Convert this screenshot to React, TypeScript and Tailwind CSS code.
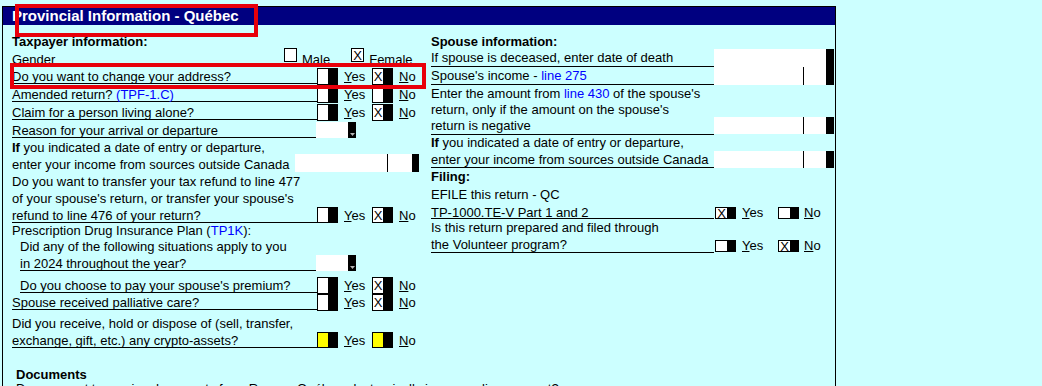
import React from "react";

function CheckBox({ checked, yellow, className = "" }: { checked?: boolean; yellow?: boolean; className?: string }) {
  return (
    <div className={`flex shrink-0 ${className}`}>
      <div
        className={`w-[12px] h-full border border-black ${yellow ? "bg-[#ffff00]" : "bg-white"} flex items-center justify-center text-[13px] leading-none`}
      >
        {checked ? "X" : null}
      </div>
      <div className="w-[9px] h-full bg-black" />
    </div>
  );
}

function YesNo({ yes, no, yellow, boxH = "h-[17px]" }: { yes?: boolean; no?: boolean; yellow?: boolean; boxH?: string }) {
  return (
    <div className="flex items-start">
      <CheckBox checked={yes} yellow={yellow} className={boxH} />
      <div className="w-[34px] pl-[6px] pt-[2px] leading-[14px]">
        <span className="underline">Y</span>es
      </div>
      <CheckBox checked={no} yellow={yellow} className={boxH} />
      <div className="pl-[6px] pt-[2px] leading-[14px]">
        <span className="underline">N</span>o
      </div>
    </div>
  );
}

function Dropdown() {
  return (
    <div className="flex h-[16px] shrink-0">
      <div className="w-[32px] bg-white" />
      <div className="w-[8px] bg-black flex items-end justify-center pb-[2px]">
        <svg width="5" height="3" viewBox="0 0 5 3">
          <path d="M0 0H5L2.5 3Z" fill="#b4b4b4" />
        </svg>
      </div>
    </div>
  );
}

function AmountField({ left, right, black, h }: { left: string; right: string; black: string; h: string }) {
  return (
    <div className={`flex shrink-0 ${h}`}>
      <div className={`${left} bg-white`} />
      <div className="w-[1px] bg-black" />
      <div className={`${right} bg-white`} />
      <div className={`${black} bg-black`} />
    </div>
  );
}

const Blue = ({ children }: { children: React.ReactNode }) => <span className="text-[#0000ff]">{children}</span>;

function RightYesNo({ yes, no }: { yes?: boolean; no?: boolean }) {
  return (
    <div className="flex items-start pl-[1px]">
      <div className="mt-[4px] flex h-[12px] shrink-0">
        <div className="flex w-[13px] items-center justify-center border border-black bg-white text-[13px] leading-none">{yes ? "X" : null}</div>
        <div className="w-[8px] bg-black" />
      </div>
      <div className="w-[42px] pl-[6px] pt-[3px] leading-[14px]">
        <span className="underline">Y</span>es
      </div>
      <div className="mt-[4px] flex h-[12px] shrink-0">
        <div className="flex w-[13px] items-center justify-center border border-black bg-white text-[13px] leading-none">{no ? "X" : null}</div>
        <div className="w-[8px] bg-black" />
      </div>
      <div className="pl-[5px] pt-[3px] leading-[14px]">
        <span className="underline">N</span>o
      </div>
    </div>
  );
}

export default function App() {
  return (
    <div className="relative w-[1042px] h-[386px] overflow-hidden bg-[#ccffff] font-['Liberation_Sans',Arial,sans-serif] text-[13px] text-black">
      <div className="ml-[2px] mt-[6px] w-[834px] h-[420px] border border-b-0 border-black">
        <div className="h-[18px] bg-[#000080] pl-[9px] text-[15px] font-bold leading-[18px] text-white">
          Provincial Information - Québec
        </div>

        <div className="flex pt-[8px]">
          {/* Left column */}
          <div className="w-[428px] pl-[9px]">
            <div className="h-[17px] font-bold leading-[17px]">Taxpayer information:</div>

            <div className="flex h-[18px] items-start">
              <div className="w-[272px] pt-[1px] leading-[17px]">Gender</div>
              <div className="-mt-[2px] h-[14px] w-[13px] border border-black bg-white" />
              <div className="pl-[5px] pt-[1px] leading-[17px]">Male</div>
              <div className="ml-[21px] -mt-[2px] flex h-[14px] w-[13px] items-center justify-center border border-black bg-white leading-none">
                X
              </div>
              <div className="pl-[5px] pt-[1px] leading-[17px]">Female</div>
            </div>

            <div className="flex h-[18px] items-start">
              <div className="mt-[2px] h-[14px] w-[305px] border-b border-black leading-[13px]">Do you want to change your address?</div>
              <YesNo no />
            </div>

            <div className="flex h-[18px] items-start">
              <div className="mt-[2px] h-[14px] w-[305px] border-b border-black leading-[13px]">
                Amended return? <Blue>(TPF-1.C)</Blue>
              </div>
              <YesNo />
            </div>

            <div className="flex h-[18px] items-start">
              <div className="mt-[2px] h-[14px] w-[305px] border-b border-black leading-[13px]">Claim for a person living alone?</div>
              <YesNo no />
            </div>

            <div className="flex h-[17px] items-start">
              <div className="mt-[2px] h-[14px] w-[304px] border-b border-black leading-[13px]">Reason for your arrival or departure</div>
              <Dropdown />
            </div>

            <div className="h-[17px] leading-[17px]">
              <span className="font-bold">If</span> you indicated a date of entry or departure,
            </div>
            <div className="flex h-[17px] items-start">
              <div className="w-[283px] leading-[17px]">enter your income from sources outside Canada</div>
              <div className="-mt-[2px]">
                <AmountField left="w-[92px]" right="w-[24px]" black="w-[7px]" h="h-[18px]" />
              </div>
            </div>

            <div className="h-[17px] leading-[17px]">Do you want to transfer your tax refund to line 477</div>
            <div className="h-[17px] leading-[17px]">of your spouse's return, or transfer your spouse's</div>
            <div className="flex h-[16px] items-start">
              <div className="mt-[2px] h-[14px] w-[305px] border-b border-black leading-[13px]">refund to line 476 of your return?</div>
              <YesNo no boxH="h-[16px]" />
            </div>

            <div className="h-[16px] leading-[16px]">
              Prescription Drug Insurance Plan (<Blue>TP1K</Blue>):
            </div>
            <div className="h-[16px] pl-[8px] leading-[16px]">Did any of the following situations apply to you</div>
            <div className="flex h-[22px] items-start">
              <div className="ml-[8px] mt-[2px] h-[14px] w-[296px] border-b border-black leading-[13px]">in 2024 throughout the year?</div>
              <Dropdown />
            </div>

            <div className="flex h-[17px] items-start">
              <div className="ml-[8px] mt-[2px] h-[14px] w-[297px] border-b border-black leading-[13px]">Do you choose to pay your spouse's premium?</div>
              <YesNo no />
            </div>
            <div className="flex h-[21px] items-start">
              <div className="mt-[2px] h-[14px] w-[305px] border-b border-black leading-[13px]">Spouse received palliative care?</div>
              <YesNo no />
            </div>

            <div className="h-[17px] leading-[17px]">Did you receive, hold or dispose of (sell, transfer,</div>
            <div className="flex h-[34px] items-start">
              <div className="mt-[2px] h-[14px] w-[305px] border-b border-black leading-[13px]">exchange, gift, etc.) any crypto-assets?</div>
              <YesNo yellow boxH="h-[16px]" />
            </div>
          </div>

          {/* Right column */}
          <div className="flex-1">
            <div className="h-[16px] font-bold leading-[17px]">Spouse information:</div>

            <div className="flex h-[18px]">
              <div className="h-full w-[283px] border-b border-black pt-[2px] leading-[14px]">If spouse is deceased, enter date of death</div>
              <div className="flex h-full">
                <div className="w-[112px] bg-white" />
                <div className="w-[8px] bg-black" />
              </div>
            </div>

            <div className="flex h-[18px]">
              <div className="h-full w-[283px] border-b border-black pt-[2px] leading-[14px]">
                Spouse's income - <Blue>line 275</Blue>
              </div>
              <AmountField left="w-[89px]" right="w-[22px]" black="w-[8px]" h="h-[18px]" />
            </div>

            <div className="h-[17px] leading-[17px]">
              Enter the amount from <Blue>line 430</Blue> of the spouse's
            </div>
            <div className="h-[15px] leading-[15px]">return, only if the amount on the spouse's</div>
            <div className="flex h-[18px]">
              <div className="h-[18px] w-[283px] border-b border-black pt-[2px] leading-[14px]">return is negative</div>
              <AmountField left="w-[89px]" right="w-[22px]" black="w-[8px]" h="h-[17px]" />
            </div>

            <div className="h-[16px] leading-[16px]">
              <span className="font-bold">If</span> you indicated a date of entry or departure,
            </div>
            <div className="flex h-[17px]">
              <div className="h-full w-[283px] border-b border-black pt-[2px] leading-[14px]">enter your income from sources outside Canada</div>
              <AmountField left="w-[89px]" right="w-[22px]" black="w-[8px]" h="h-[17px]" />
            </div>

            <div className="h-[18px] font-bold leading-[18px]">Filing:</div>
            <div className="h-[17px] leading-[17px]">EFILE this return - QC</div>
            <div className="flex h-[16px] items-start">
              <div className="h-full w-[283px] border-b border-black pt-[3px] leading-[14px]">TP-1000.TE-V Part 1 and 2</div>
              <RightYesNo yes />
            </div>
            <div className="h-[17px] leading-[17px]">Is this return prepared and filed through</div>
            <div className="flex h-[17px] items-start">
              <div className="h-full w-[283px] border-b border-black pt-[2px] leading-[14px]">the Volunteer program?</div>
              <RightYesNo no />
            </div>
          </div>
        </div>

        <div className="pl-[13px]">
          <div className="h-[14px] font-bold leading-[17px]">Documents</div>
          <div className="h-[17px] leading-[17px]">
            Do you want to receive documents from Revenu Québec electronically in your online account?
          </div>
        </div>
      </div>

      {/* Highlight overlays */}
      <div className="absolute left-[15px] top-[4px] h-[33px] w-[243px] border-[4px] border-[#e8000b]" />
      <div className="absolute left-[10px] top-[63px] h-[26px] w-[416px] border-[4px] border-[#e8000b]" />
    </div>
  );
}
